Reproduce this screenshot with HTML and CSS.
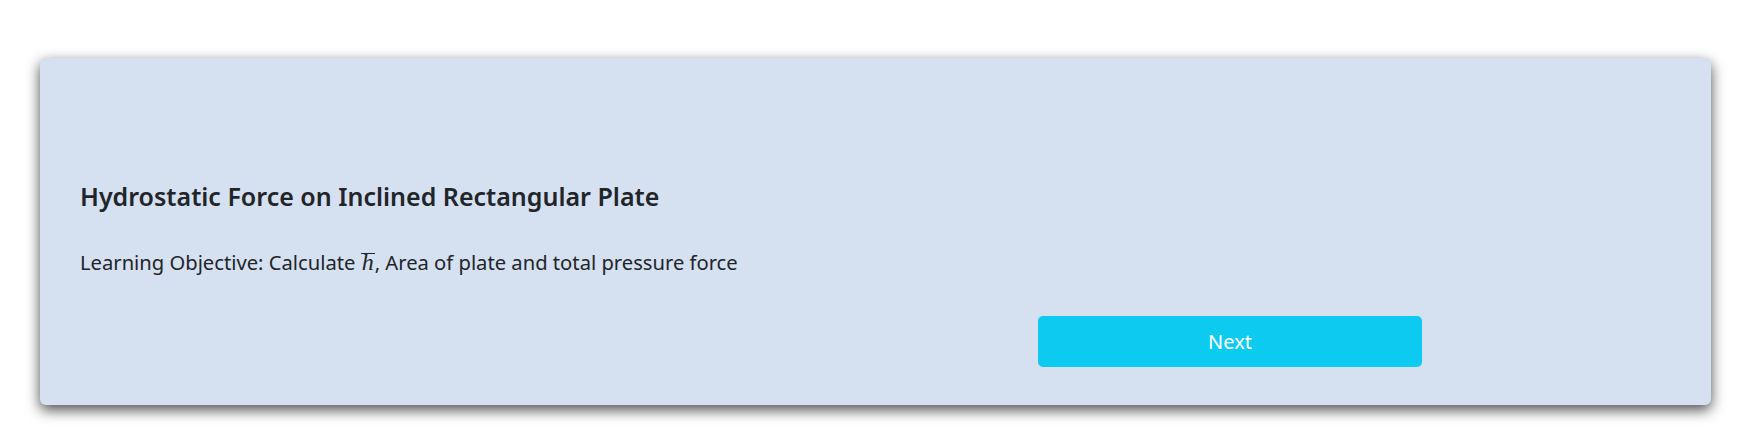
FILE: index.html
```html
<!DOCTYPE html>
<html lang="en">
<head>
<meta charset="utf-8">
<title>Hydrostatic Force on Inclined Rectangular Plate</title>
<link rel="stylesheet" href="styles.css">
</head>
<body>
<main class="page">
  <section class="card">
    <h5 class="title">Hydrostatic Force on Inclined Rectangular Plate</h5>
    <p class="objective">Learning Objective: Calculate <span class="math"><span class="hbar">h</span></span>, Area of plate and total pressure force</p>
    <div class="actions">
      <button class="btn-next" type="button">Next</button>
    </div>
  </section>
</main>
</body>
</html>
```

FILE: styles.css
```css
html, body {
  margin: 0;
  padding: 0;
  background: #ffffff;
}

body {
  font-family: "Noto Sans", "Open Sans", sans-serif;
  color: #212529;
}

.page {
  padding: 58px 49px 38px 40px;
}

.card {
  background: #d5e0f1;
  border-radius: 6px;
  box-shadow: 0 5px 14px rgba(0, 0, 0, 0.7);
  padding: 123px 40px 38px 40px;
}

.title {
  margin: 0;
  font-size: 25px;
  line-height: 30px;
  font-weight: 600;
}

.objective {
  margin: 39px 0 0 0;
  font-size: 20.2px;
  line-height: 24px;
  height: 24px;
}

.math {
  font-family: "Liberation Serif", serif;
  font-style: italic;
  font-size: 24px;
  line-height: 16px;
}

.hbar {
  display: inline-block;
  border-top: 1px solid #212529;
  line-height: 17px;
  padding: 0 1px;
}

.actions {
  margin-top: 42px;
  padding-left: 958px;
  display: flex;
}

.btn-next {
  width: 384px;
  height: 51px;
  border: 0;
  border-radius: 5px;
  background: #0dcaf0;
  color: #ffffff;
  font-family: "Noto Sans", "Open Sans", sans-serif;
  font-size: 20px;
  cursor: pointer;
}
```
